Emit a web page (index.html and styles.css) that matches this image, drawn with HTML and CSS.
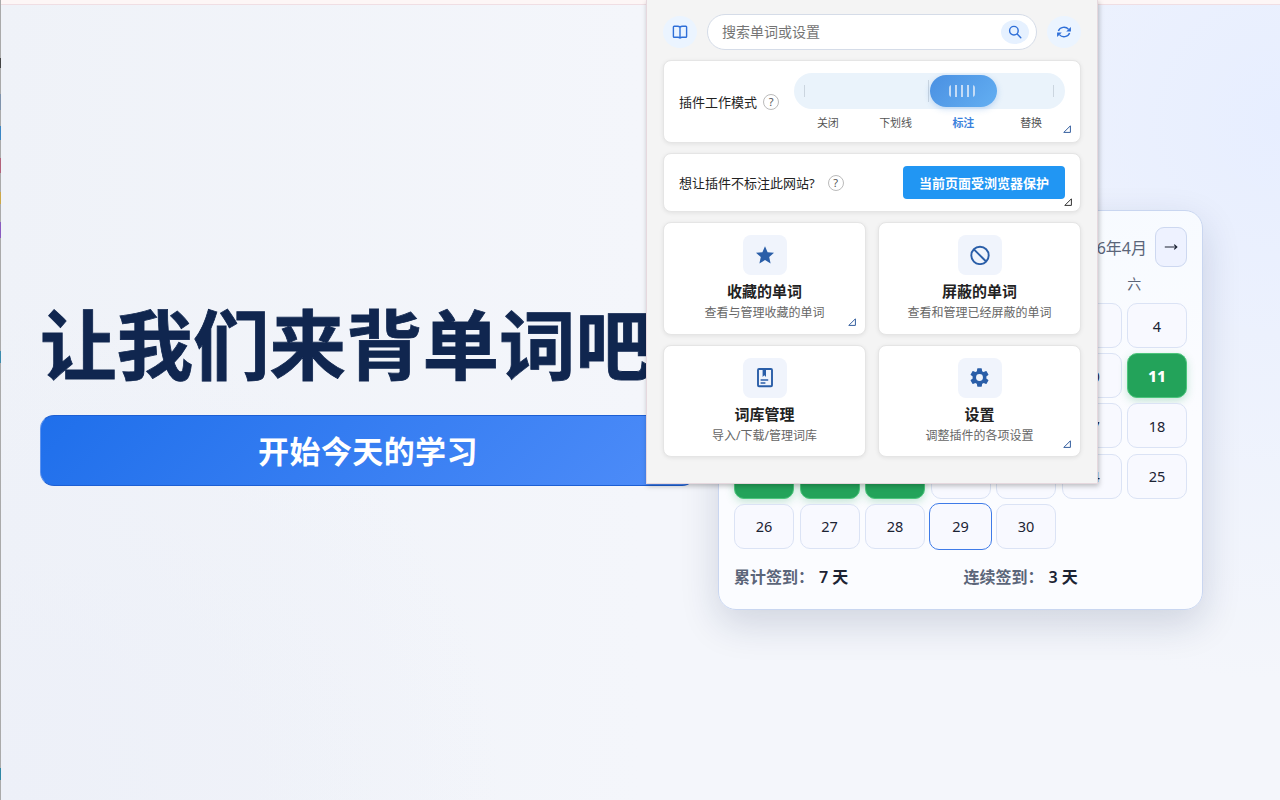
FILE: index.html
```html
<!DOCTYPE html>
<html lang="zh-CN">
<head>
  <meta charset="UTF-8" />
  <title>背单词</title>
  <link rel="stylesheet" href="styles.css">
</head>
<body>

  <main class="page">
    <section class="hero">
      <h1>让我们来背单词吧</h1>
      <button class="start">开始今天的学习</button>
    </section>

    <section class="calendar">
      <div class="cal-head">
        <span id="month">2026年4月</span>
        <button class="next">
          <svg width="14" height="8" viewBox="0 0 14 8" fill="none" stroke="#1c2333" stroke-width="1.2"><path d="M.8 4H12.6M10.2 1.6L12.8 4L10.2 6.4"/></svg>
        </button>
      </div>
      <div class="week">
        <span></span><span></span><span></span><span></span><span></span><span></span><span>六</span>
      </div>
      <div class="days" id="days"></div>
      <div class="stats">
        <div>累计签到：<b>7 天</b></div>
        <div>连续签到：<b>3 天</b></div>
      </div>
    </section>
  </main>

  <aside class="popup">
    <div class="toolbar">
      <button class="round">
        <svg width="16" height="16" viewBox="0 0 16 16" fill="none" stroke="#2f6fd8" stroke-width="1.4" stroke-linejoin="round"><path d="M8 3.2C7.4 2.6 6.6 2.3 5.6 2.3H2.2Q1.4 2.3 1.4 3.1V12.4Q1.4 13.2 2.2 13.2H6Q7.3 13.2 8 13.9Q8.7 13.2 10 13.2H13.8Q14.6 13.2 14.6 12.4V3.1Q14.6 2.3 13.8 2.3H10.4C9.4 2.3 8.6 2.6 8 3.2V13.6"/></svg>
      </button>
      <div class="search">
        <span>搜索单词或设置</span>
        <button>
          <svg width="14" height="14" viewBox="0 0 14 14" fill="none" stroke="#2f6fd8" stroke-width="1.4" stroke-linecap="round"><circle cx="5.9" cy="5.7" r="4.3"/><path d="M9.2 9L12.8 12.8"/></svg>
        </button>
      </div>
      <button class="round">
        <svg width="16" height="16" viewBox="0 0 16 16" fill="none" stroke="#2f6fd8" stroke-width="1.4"><path d="M2.4 6.9A5.8 5.2 0 0 1 12.6 5.4M13.6 9.1A5.8 5.2 0 0 1 3.4 10.6"/><path fill="#2f6fd8" stroke="none" d="M14.9 3V7.6H10.2ZM1.1 13V8.4H5.8Z"/></svg>
      </button>
    </div>

    <div class="card mode">
      <span class="label">插件工作模式</span><i class="help">?</i>
      <div class="slider">
        <div class="track"><i class="tick first"></i><i class="tick mid"></i><i class="thumb"><em></em></i><i class="tick last"></i></div>
        <div class="names"><span>关闭</span><span>下划线</span><span class="on">标注</span><span>替换</span></div>
      </div>
      <svg class="corner mode-corner" width="8" height="8" viewBox="0 0 8 8"><path d="M.8 7.4H7.4V.8Z"/></svg>
    </div>

    <div class="card site">
      <span class="label">想让插件不标注此网站?</span><i class="help">?</i>
      <button class="protect">当前页面受浏览器保护</button>
      <svg class="corner site-corner" width="8" height="8" viewBox="0 0 8 8"><path d="M.8 7.4H7.4V.8Z"/></svg>
    </div>

    <div class="menu">
      <div class="card item">
        <div class="icon"><svg width="20" height="20" viewBox="0 0 20 20" fill="#2a5ea8"><path d="M10 1.2L12.6 7.2L19 7.8L14.2 12.1L15.6 18.5L10 15.1L4.4 18.5L5.8 12.1L1 7.8L7.4 7.2Z"/></svg></div>
        <h3>收藏的单词</h3>
        <p>查看与管理收藏的单词</p>
        <svg class="corner" width="8" height="8" viewBox="0 0 8 8"><path d="M.8 7.4H7.4V.8Z"/></svg>
      </div>
      <div class="card item">
        <div class="icon"><svg width="20" height="20" viewBox="0 0 20 20" fill="none" stroke="#2a5ea8" stroke-width="1.9"><circle cx="10" cy="10.4" r="8.7"/><path d="M3.9 4.3L16.1 16.5"/></svg></div>
        <h3>屏蔽的单词</h3>
        <p>查看和管理已经屏蔽的单词</p>
      </div>
      <div class="card item">
        <div class="icon"><svg width="20" height="20" viewBox="0 0 20 20" fill="none" stroke="#2a5ea8" stroke-width="1.9"><rect x="3" y="1" width="14" height="17.2" rx="1"/><path fill="#2a5ea8" stroke="none" d="M7.6 1.6H11V9L9.3 7.3L7.6 9Z"/><path stroke-width="1.5" d="M5.6 12H13.2M5.6 15H10.4"/></svg></div>
        <h3>词库管理</h3>
        <p>导入/下载/管理词库</p>
      </div>
      <div class="card item">
        <div class="icon gear"><svg width="23" height="23" viewBox="0 0 24 24" fill="#2a5ea8"><path d="M19.14 12.94c.04-.3.06-.61.06-.94s-.02-.64-.07-.94l2.03-1.58a.49.49 0 0 0 .12-.61l-1.92-3.32a.49.49 0 0 0-.59-.22l-2.39.96a7 7 0 0 0-1.62-.94l-.36-2.54a.48.48 0 0 0-.48-.41h-3.84a.48.48 0 0 0-.47.41l-.36 2.54a7 7 0 0 0-1.62.94l-2.39-.96a.48.48 0 0 0-.59.22L2.74 8.87a.47.47 0 0 0 .12.61l2.03 1.58a6 6 0 0 0 0 1.88l-2.03 1.58a.49.49 0 0 0-.12.61l1.92 3.32c.12.22.37.29.59.22l2.39-.96c.5.38 1.03.7 1.62.94l.36 2.54c.05.24.24.41.48.41h3.84c.24 0 .44-.17.47-.41l.36-2.54a7 7 0 0 0 1.62-.94l2.39.96c.22.08.47 0 .59-.22l1.92-3.32a.47.47 0 0 0-.12-.61zM12 15.6a3.6 3.6 0 1 1 0-7.2 3.6 3.6 0 0 1 0 7.2z"/></svg></div>
        <h3>设置</h3>
        <p>调整插件的各项设置</p>
        <svg class="corner" width="8" height="8" viewBox="0 0 8 8"><path d="M.8 7.4H7.4V.8Z"/></svg>
      </div>
    </div>
  </aside>

  <script>
    const signed = [11, 19, 20, 21];
    const today = 29;
    // 被弹窗挡住的日期不写数字
    const visible = d => d > 25 || d % 7 === 4 || [10, 17, 24].includes(d);
    let html = '<i></i><i></i><i></i>';

    for (let d = 1; d <= 30; d++) {
      const cls = signed.includes(d) ? 'day signed' : d === today ? 'day today' : 'day';
      html += `<span class="${cls}">${visible(d) ? d : ''}</span>`;
    }
    document.getElementById('days').innerHTML = html;
  </script>
</body>
</html>
```
FILE: styles.css
```css
*{box-sizing:border-box;}
body{margin:0;height:800px;overflow:hidden;position:relative;padding-left:1px;font-family:"Noto Sans","Noto Sans CJK SC",sans-serif;color:#1c2333;background:radial-gradient(circle at 100% 15%,#e7eeff 0,rgba(234,240,255,0) 560px),radial-gradient(circle at 0 100%,#edf0f8 0,rgba(238,241,249,0) 500px),linear-gradient(90deg,#eff2f8 0,#f4f6fb 50%,#f4f6fb 100%);}
body::before{content:"";position:absolute;top:0;left:0;right:0;height:4px;background:#fdf6f6;border-bottom:1px solid #f0dee3;}
body::after{content:"";position:absolute;top:0;left:0;width:1px;height:800px;background:linear-gradient(#aaa 58px,#444 58px 68px,#aaa 68px 94px,#7f93ac 94px 110px,#aaa 110px 126px,#3b86c4 126px 140px,#aaa 140px 158px,#b3627a 158px 173px,#aaa 173px 192px,#cda848 192px 204px,#aaa 204px 222px,#8a5cc0 222px 238px,#aaa 238px 351px,#3c8cae 351px 363px,#aaa 363px 768px,#2f87a5 768px 780px,#aaa 780px);}
h1,h3,p{margin:0;}
button{font-family:inherit;padding:0;}
svg{display:block;}
i,em{font-style:normal;}

.page{display:flex;align-items:flex-start;padding:210px 77px 0 39px;gap:22px;}
.hero{width:656px;padding-top:76px;}
h1{font-size:76.5px;line-height:110px;height:129px;font-weight:700;font-family:"Noto Sans CJK SC",sans-serif;color:#10264f;white-space:nowrap;-webkit-text-stroke:.8px #10264f;}
.start{display:block;width:100%;height:71px;padding-bottom:3px;border:1px solid #1d5fd3;border-left-color:#5e93ee;border-radius:14px;background:linear-gradient(135deg,#1f6feb,#4f8df9);color:#fff;font-size:31px;font-weight:700;letter-spacing:.4px;}

.calendar{flex:none;width:485px;height:400px;padding:16px 15px 0;border:1px solid #c9d6f0;border-radius:18px;background:linear-gradient(170deg,#f6faff,#fbfcff 60%);box-shadow:0 14px 38px rgba(20,40,80,.16);}
.cal-head{display:flex;justify-content:flex-end;align-items:center;gap:8px;height:40px;font-size:16px;color:#5b6579;}
.next{display:grid;place-items:center;width:32px;height:40px;border:1px solid #cdd8f0;border-radius:9px;background:#eef2ff;}
.week{display:grid;grid-template-columns:repeat(7,1fr);width:431px;height:36px;line-height:33px;font-size:14px;color:#5b6579;text-align:center;}
.days{display:grid;grid-template-columns:repeat(7,1fr);grid-auto-rows:45px;gap:5.2px 5.5px;}
.day{display:flex;align-items:center;justify-content:center;border:1px solid #dbe3f5;border-radius:10px;background:#f8f9ff;font-size:14.5px;}
.signed{background:#23a35a;border-color:#4cc57c;color:#fff;font-size:15.5px;font-weight:800;box-shadow:0 3px 8px rgba(35,163,90,.25);}
.today{border-color:#3f7be8;margin:-1px -1.5px;}
.stats{display:grid;grid-template-columns:1fr 1fr;column-gap:6px;padding-top:16px;font-size:16px;line-height:24px;font-weight:600;color:#5b6579;}
.stats b{margin-left:5px;font-weight:600;color:#1c2333;}

.popup{position:absolute;left:646px;top:0;width:452px;height:484px;padding:14px 16px 0;border:1px solid #e6d8de;border-top:0;background:#f4f4f4;box-shadow:1px 2px 5px rgba(0,0,0,.25);color:#222;}
.toolbar{display:flex;align-items:center;gap:10px;height:36px;margin-bottom:10px;}
.round{display:grid;place-items:center;flex:none;width:34px;height:32px;border:0;border-radius:50%;background:#ebf4ff;}
.search{flex:1;display:flex;align-items:center;justify-content:space-between;height:36px;padding:0 7px 0 14px;border:1px solid #d5dce8;border-radius:18px;background:#fff;font-size:14px;color:#757575;}
.search span{margin-top:-2px;}
.search button{display:grid;place-items:center;width:28px;height:24px;border:0;border-radius:50%;background:#e6f1ff;}

.card{position:relative;border:1px solid #e5e5e5;border-radius:8px;background:#fff;box-shadow:0 1px 4px rgba(0,0,0,.08);}
.mode,.site{display:flex;align-items:center;padding:0 15px;margin-bottom:10px;font-size:13px;}
.mode{height:83px;}
.site{height:59px;}
.label{white-space:nowrap;}
.help{display:grid;place-items:center;flex:none;width:16px;height:16px;margin-left:6px;border:1px solid #bbb;border-radius:50%;font-size:11px;line-height:14px;color:#555;}
.site .help{margin-left:13px;}
.slider{width:271px;margin-left:auto;padding-top:1px;}
.track{position:relative;height:36px;border-radius:18px;background:#eaf3fb;}
.tick{position:absolute;top:12px;width:1px;height:12px;background:#cbd5df;}
.first{left:10px;}
.mid{left:134px;top:7px;height:22px;}
.last{right:11px;}
.thumb{position:absolute;left:136px;top:2px;width:67px;height:32px;border-radius:16px;background:linear-gradient(135deg,#4a90e2,#63aff2);box-shadow:0 2px 6px rgba(74,144,226,.3);display:grid;place-items:center;}
.thumb em{width:26px;height:12px;margin-right:3px;border-radius:3px;background:repeating-linear-gradient(90deg,#c5dcf6 0 2px,transparent 2px 6px);}
.names{display:grid;grid-template-columns:repeat(4,1fr);padding-top:5px;font-size:11px;line-height:18px;color:#555;text-align:center;}
.names .on{color:#3b82dc;font-weight:700;}
.protect{width:162px;height:33px;margin-left:auto;border:0;border-radius:4px;background:#2196f3;color:#fff;font-size:13px;font-weight:700;}

.menu{display:grid;grid-template-columns:1fr 1fr;grid-template-rows:113px 112px;gap:10px 12px;}
.item{display:flex;flex-direction:column;align-items:center;padding-top:12px;}
.icon{display:grid;place-items:center;flex:none;width:44px;height:40px;border-radius:8px;background:#f0f4fc;}
.gear{padding-bottom:1px;}
.item h3{margin-top:5px;font-size:15px;line-height:22px;}
.item p{margin-top:1px;font-size:12px;line-height:20px;color:#666;}
.corner{position:absolute;right:9px;bottom:8px;fill:none;stroke:#345e9e;stroke-width:1;}
.mode-corner{bottom:9px;}
.site-corner{bottom:5px;right:8px;stroke:#333;}
```
